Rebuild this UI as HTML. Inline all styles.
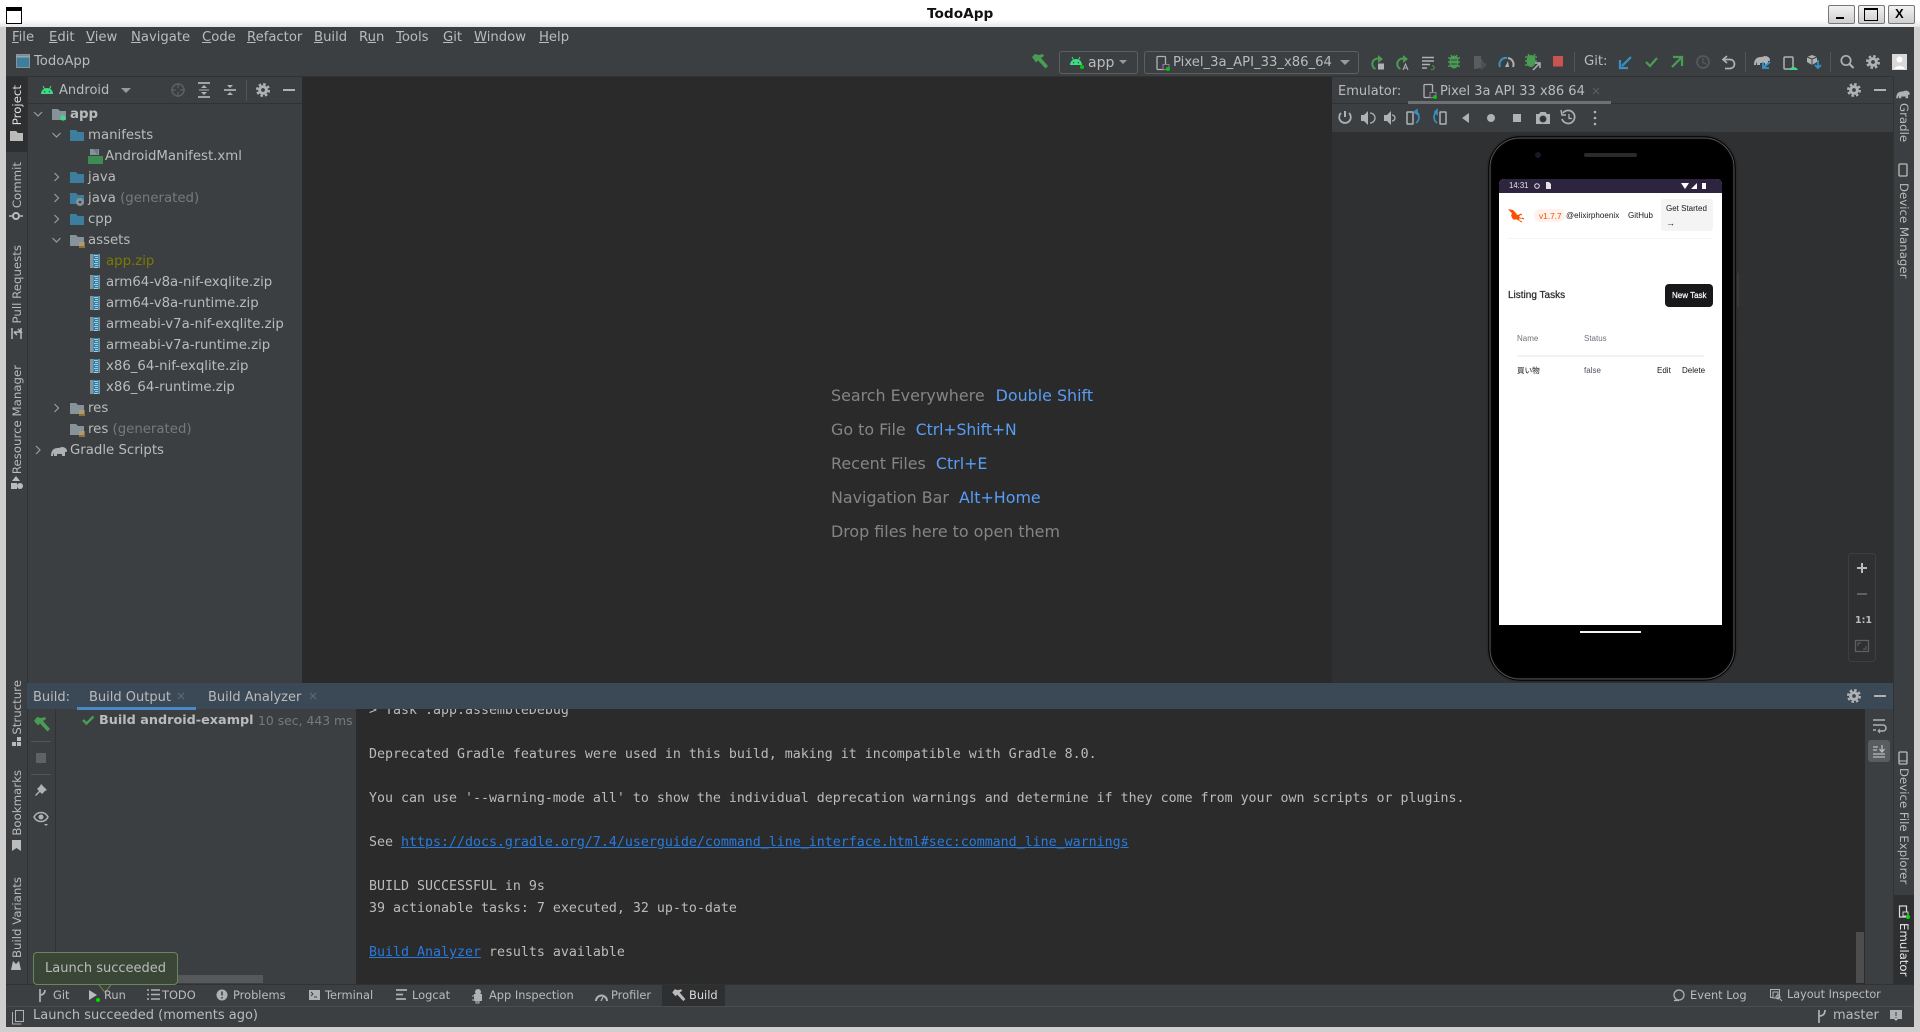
<!DOCTYPE html>
<html lang="en"><head><meta charset="utf-8"><title>TodoApp</title>
<style>
html,body{margin:0;padding:0}
body{width:1920px;height:1032px;overflow:hidden;position:relative;background:#cfcfcf;font-family:"DejaVu Sans","Liberation Sans",sans-serif;color:#bbb;font-size:13px}
.b{position:absolute}
.t{position:absolute;white-space:pre;line-height:20px;height:20px;font-size:13px;color:#bbb}
.tr{font-size:13.3px}
.m{font-size:13.2px}
.tw{font-size:11.4px}
.d{color:#787878}
.h{font-size:15.9px;line-height:24px;height:24px;color:#858585}
.h i{font-style:normal;color:#589df6;margin-left:10px}
.v{position:absolute;white-space:pre;font-size:11.75px;line-height:21px;width:21px;writing-mode:vertical-rl;color:#bbb}
.l{transform:rotate(180deg)}
.c{position:absolute;white-space:pre;font:13.29px/22px "DejaVu Sans Mono","Liberation Mono",monospace;color:#bbb;height:22px}
.c a{color:#287bde;text-decoration:underline}
.s{position:absolute;white-space:pre;font-family:"Liberation Sans","Noto Sans CJK JP",sans-serif;font-size:7.6px;line-height:10px;height:10px;color:#18181b;font-weight:500}
svg{position:absolute;left:0;top:0}
</style></head><body>
<!-- frame -->
<div class="b" style="left:0;top:0;width:1920px;height:27px;background:linear-gradient(#fff 72%,#e6e6e6)"></div>
<div class="b" style="left:6px;top:27px;width:1908px;height:1000px;background:#3c3f41"></div>
<div class="b" style="left:6px;top:76px;width:1887px;height:1px;background:#323232"></div>
<div class="b" style="left:6px;top:77px;width:21px;height:75px;background:#2d2f30"></div>
<div class="b" style="left:27px;top:77px;width:1px;height:907px;background:#323232"></div>
<div class="b" style="left:28px;top:103px;width:274px;height:1px;background:#323232"></div>
<div class="b" style="left:302px;top:77px;width:1030px;height:606px;background:#2a2a2a"></div>
<div class="b" style="left:1332px;top:103px;width:561px;height:1px;background:#323232"></div>
<div class="b" style="left:1332px;top:132px;width:561px;height:551px;background:#2f3031"></div>
<div class="b" style="left:1893px;top:895px;width:21px;height:89px;background:#2d2f30"></div>
<div class="b" style="left:1893px;top:77px;width:1px;height:907px;background:#323232"></div>
<div class="b" style="left:27px;top:683px;width:1866px;height:26px;background:#3b4856"></div>
<div class="b" style="left:77px;top:707px;width:119px;height:3px;background:#4a88c7"></div>
<div class="b" style="left:1408px;top:101px;width:203px;height:3px;background:#6e7174"></div>
<div class="b" style="left:55px;top:709px;width:1px;height:275px;background:#323232"></div>
<div class="b" style="left:356px;top:709px;width:1509px;height:275px;background:#2b2b2b;overflow:hidden"></div>
<div class="b" style="left:6px;top:984px;width:1908px;height:1px;background:#323232"></div>
<div class="b" style="left:6px;top:1006px;width:1908px;height:1px;background:#4a4d4f"></div>
<div class="b" style="left:662px;top:985px;width:63px;height:21px;background:#2d2f30"></div>
<div class="b" style="left:1868px;top:740px;width:22px;height:22px;border-radius:3px;background:#5a5d5f"></div>
<div class="b" style="left:1856px;top:932px;width:8px;height:51px;background:#4d4d4d"></div>
<div class="b" style="left:56px;top:975px;width:207px;height:8px;background:#565859"></div>
<!-- combos -->
<div class="b" style="left:1059px;top:51px;width:77px;height:21px;border:1px solid #5e6060;border-radius:3px"></div>
<div class="b" style="left:1144px;top:51px;width:213px;height:21px;border:1px solid #5e6060;border-radius:3px"></div>
<!-- window buttons -->
<div class="b" style="left:1828px;top:5px;width:25px;height:17px;background:linear-gradient(#f2f2f2,#cfcfcf);border:1px solid #777;border-radius:2px"></div>
<div class="b" style="left:1858px;top:5px;width:25px;height:17px;background:linear-gradient(#f2f2f2,#cfcfcf);border:1px solid #777;border-radius:2px"></div>
<div class="b" style="left:1888px;top:5px;width:25px;height:17px;background:linear-gradient(#f2f2f2,#cfcfcf);border:1px solid #777;border-radius:2px"></div>
<div class="b" style="left:1836px;top:17px;width:8px;height:2px;background:#000"></div>
<div class="b" style="left:1864px;top:8px;width:12px;height:10px;border:1px solid #000;border-top:2px solid #000"></div>
<div class="t" style="left:1895px;top:4px;color:#000;font:bold 13px/20px 'Liberation Sans',sans-serif">X</div>
<div class="b" style="left:6px;top:7px;width:14px;height:12px;border:1px solid #000;border-top:4px solid #000;background:#fff;box-sizing:content-box"></div>
<div class="t" style="left:927px;top:4px;color:#111;font:bold 13.7px/20px 'DejaVu Sans',sans-serif">TodoApp</div>

<svg width="1920" height="1032" viewBox="0 0 1920 1032" fill="none">
<defs>
<g id="gear"><circle r="3.4" stroke="#afb1b3" stroke-width="3"/><circle r="5.9" stroke="#afb1b3" stroke-width="2.2" stroke-dasharray="2.6 2.03"/></g>
<path id="fb" d="M0 0h6l2 2h6v9H0z" fill="#3d7d9d"/>
<path id="fg" d="M0 0h6l2 2h6v9H0z" fill="#87939a"/>
<g id="st"><path d="M0 0h6M0 2h6M0 4h6" stroke="#d9a343" stroke-width="1"/></g>
<path id="chr" d="M-2-4l4 4-4 4" stroke="#9a9c9e" stroke-width="1.2"/>
<path id="chd" d="M-4-2l4 4 4-4" stroke="#9a9c9e" stroke-width="1.2"/>
<g id="zip"><rect x="0" y="0" width="3.500" height="14" fill="#87939a"/><rect x="3.500" y="0" width="5" height="14" fill="#2f7ea8"/><path d="M4 1.500h4M5 3.500h3M4 5.500h4M5 7.500h3M4 9.500h4M5 11.500h3M4 13.500h4" stroke="#8fd4ee" stroke-width="1"/><rect x="8.500" y="0" width="1.500" height="14" fill="#87939a"/></g>
<g id="droid"><path d="M-6 4a6 6 0 0 1 12 0z" fill="#3ddc84"/><path d="M-4-4l1.6 3M4-4L2.4-1" stroke="#3ddc84"/><circle cx="-2.4" cy="1.7" r=".7" fill="#3c3f41"/><circle cx="2.4" cy="1.7" r=".7" fill="#3c3f41"/></g>
<g id="ph"><rect x="-6" y="-6.500" width="8.500" height="13" rx="1" stroke="#afb1b3" stroke-width="1.300"/><rect x="0" y="1.500" width="6" height="5" fill="#3c3f41" stroke="#9876aa"/><circle cx="5" cy="6" r="2" fill="#0c0"/></g>
<g id="ham"><path d="M-7-4l3-3 4 1 4-1 1 2-3 2 7 8-2.5 2.5-7.5-8-2 2z" fill="#499c54"/></g>
<g id="ele"><path d="M-8 5c0-6 3-8 7-8 2 0 3-1 4-1 3 0 5 2 5 4 0 1-1 1-2 1v4H3V3H-2V5H-5V2c-1 1-1 2-1 3z" fill="#afb1b3"/></g>
</defs>

<!-- toolbar project icon -->
<rect x="16.500" y="54.500" width="13" height="13" fill="#3d7d9d" stroke="#87939a"/><path d="M16 56.500h14" stroke="#9fa3a5" stroke-width="2"/>

<!-- toolbar right -->
<use href="#ham" x="1039" y="61"/>
<use href="#droid" x="1076" y="61"/><circle cx="1082" cy="67" r="2" fill="#0c0"/>
<path d="M1119 60l4 4 4-4z M1340 60l5 5 5-5z" fill="#999"/>
<use href="#ph" x="1163" y="63"/>
<!-- run -->
<path d="M1378 58.500a5.500 5.500 0 0 0-2.500 10.500" stroke="#499c54" stroke-width="2"/><path d="M1378 55l5 4-5 4z" fill="#499c54"/><rect x="1378" y="63.500" width="6" height="6" fill="#afb1b3"/>
<path d="M1403 58.500a5.500 5.500 0 0 0-2.500 10.500" stroke="#499c54" stroke-width="2"/><path d="M1403 55l5 4-5 4z" fill="#499c54"/><path d="M1403 70l2.500-6 2.500 6M1404 68h3" stroke="#afb1b3"/>
<path d="M1422 57.500h12M1422 61h12M1422 64.500h8M1422 68h5" stroke="#afb1b3" stroke-width="1.600"/><path d="M1431 69.500c3 1 5-3 1-4" stroke="#499c54"/>
<ellipse cx="1454" cy="62" rx="4.500" ry="6.500" fill="#499c54"/><path d="M1448 58h12M1448 62h12M1448 66h12M1451 55l1 2M1457 55l-1 2" stroke="#499c54" stroke-width="1.400"/><path d="M1451 60h6M1451 64h6" stroke="#3c3f41"/>
<path d="M1474 56h7v3l2 2-2 2v5l-7 1z" fill="#5a5d5f"/><path d="M1481 60l6 5-6 5z" fill="#4e5052"/>
<path d="M1500 67a6.500 6.500 0 0 1 7-9" stroke="#3592c4" stroke-width="2"/><path d="M1508 58a6.500 6.500 0 0 1 5 9" stroke="#afb1b3" stroke-width="2"/><path d="M1505 67l3-6 1 6z" fill="#afb1b3"/>
<ellipse cx="1531" cy="61" rx="4.500" ry="6" fill="#499c54"/><path d="M1525 57h12M1525 61h12M1525 65h8M1528 54l1 2M1535 54l-1 2" stroke="#499c54" stroke-width="1.500"/><path d="M1533 70l6-6M1535 63h5v5" stroke="#afb1b3" stroke-width="1.500"/>
<rect x="1553" y="56" width="10" height="10.500" fill="#c75450"/>
<path d="M1574.500 52v20M1745.500 52v20M1830.500 52v20" stroke="#515658"/>
<path d="M1631 57l-9 9M1620 60v8h8" stroke="#3592c4" stroke-width="2.200"/>
<path d="M1646 62l4 4 7-8" stroke="#499c54" stroke-width="2.200"/>
<path d="M1672 67l9-9M1673 57h9v9" stroke="#499c54" stroke-width="2.200"/>
<circle cx="1703" cy="62" r="6" stroke="#55585a" stroke-width="1.800"/><path d="M1703 58v4.500l3 1.500" stroke="#55585a" stroke-width="1.300"/>
<path d="M1727 56l-4 3.500 4 3.500" stroke="#afb1b3" stroke-width="1.700"/><path d="M1724 59.500h6a4 4 0 0 1 0 9h-5" stroke="#afb1b3" stroke-width="1.700"/>
<g transform="translate(1762 60)"><use href="#ele"/><path d="M8 2l-6 5M1 2v6h6" stroke="#3592c4" stroke-width="1.800"/></g>
<rect x="1784" y="57" width="9" height="12" rx="1" stroke="#afb1b3" stroke-width="1.500"/><path d="M1789 70a5 5 0 0 1 9 0z" fill="#3ddc84"/>
<path d="M1807 57l5-2 5 2v5l-5 3-5-3z" fill="#afb1b3"/><path d="M1807 57l5 2 5-2M1812 59v6" stroke="#3c3f41"/><path d="M1818 60v8M1815 65l3 3 3-3" stroke="#3592c4" stroke-width="1.800"/>
<circle cx="1846" cy="60.500" r="4.700" stroke="#afb1b3" stroke-width="1.700"/><path d="M1849.500 64l4 4" stroke="#afb1b3" stroke-width="2"/>
<use href="#gear" x="1873" y="62"/>
<rect x="1892" y="54" width="15" height="16" fill="#d8d8d8"/><circle cx="1899.500" cy="59.500" r="3" fill="#fff"/><path d="M1894 69a6 5 0 0 1 11 0z" fill="#fff"/>

<!-- project header -->
<use href="#droid" x="47" y="90"/>
<path d="M121 88l5 5 5-5z" fill="#999"/>
<circle cx="178" cy="90" r="6" stroke="#5e6060" stroke-width="1.500"/><path d="M178 83v5M178 92v5M171 90h5M180 90h5" stroke="#5e6060" stroke-width="1.200"/>
<path d="M198 83h12M198 97h12" stroke="#afb1b3" stroke-width="1.700"/><path d="M204 85l-3 3h6zM204 95l-3-3h6z" fill="#afb1b3"/><path d="M199 90h10" stroke="#afb1b3"/>
<path d="M224 90h12" stroke="#afb1b3" stroke-width="1.700"/><path d="M230 88l-3-3h6zM230 92l-3 3h6z" fill="#afb1b3"/>
<path d="M246.500 80v21" stroke="#515658"/>
<use href="#gear" x="263" y="90"/>
<path d="M283 90h12" stroke="#afb1b3" stroke-width="2"/>

<!-- tree icons -->
<use href="#chd" x="38" y="114"/><use href="#fg" x="52" y="109"/><circle cx="63" cy="118" r="2.600" fill="#3ddc84"/>
<use href="#chd" x="56.500" y="135"/><use href="#fb" x="70" y="130"/>
<rect x="90" y="149" width="9" height="6" fill="#87939a"/><rect x="88" y="156" width="15" height="8" fill="#3d8c52"/><path d="M93 149h5v7" fill="#6d7a82"/>
<use href="#chr" x="56.500" y="177"/><use href="#fb" x="70" y="172"/>
<use href="#chr" x="56.500" y="198"/><use href="#fb" x="70" y="193"/><circle cx="80" cy="202" r="4" fill="#87939a"/><circle cx="80" cy="202" r="1.300" fill="#3c3f41"/>
<use href="#chr" x="56.500" y="219"/><use href="#fb" x="70" y="214"/>
<use href="#chd" x="56.500" y="240"/><use href="#fg" x="70" y="235"/><use href="#st" x="79" y="243"/>
<use href="#zip" x="90" y="254"/><use href="#zip" x="90" y="275"/><use href="#zip" x="90" y="296"/><use href="#zip" x="90" y="317"/><use href="#zip" x="90" y="338"/><use href="#zip" x="90" y="359"/><use href="#zip" x="90" y="380"/>
<use href="#chr" x="56.500" y="408"/><use href="#fg" x="70" y="403"/><use href="#st" x="79" y="411"/>
<use href="#fg" x="70" y="424"/><use href="#st" x="79" y="432"/>
<use href="#chr" x="38" y="450"/>
<g transform="translate(59 451)"><use href="#ele"/></g>

<!-- left strip icons -->
<path d="M10 131h6l2 2h5v8H10z" fill="#bbb"/>
<circle cx="16" cy="216" r="3" stroke="#bbb" stroke-width="2"/><path d="M9 216h3M20 216h3" stroke="#bbb" stroke-width="1.500"/>
<path d="M12 328v11M21 328v11M14 332h7l-3-3M14 332l3 3" stroke="#bbb" stroke-width="1.500"/>
<path d="M16 476l4 5h-8z" fill="#bbb"/><rect x="11" y="483" width="6" height="6" fill="#bbb"/><circle cx="20" cy="486" r="3" fill="#bbb"/>
<rect x="12" y="742" width="4" height="4" fill="#bbb"/><rect x="17" y="737" width="4" height="4" fill="#bbb"/><rect x="17" y="742" width="4" height="4" fill="#bbb"/>
<path d="M12 840h9v11l-4.500-3-4.500 3z" fill="#bbb"/>
<path d="M11 970l2-9 3 3 3-3 2 9z" fill="#bbb"/>

<!-- right strip icons -->
<g transform="translate(1903 94) scale(.85)"><use href="#ele"/></g>
<rect x="1899" y="164" width="8" height="12" rx="1" stroke="#bbb" stroke-width="1.300"/>
<rect x="1899" y="752" width="8" height="12" rx="1" stroke="#bbb" stroke-width="1.300"/><path d="M1899 761h8" stroke="#bbb"/>
<rect x="1899.500" y="906" width="7" height="11" stroke="#ddd" stroke-width="1.200"/><rect x="1903" y="912" width="5" height="4" fill="#2d2f30" stroke="#ccc"/><circle cx="1908" cy="917" r="2" fill="#0d0"/>

<!-- emulator header -->
<use href="#ph" x="1430" y="91"/>
<path d="M1593 88l6 6M1599 88l-6 6" stroke="#5e6060" stroke-width="1.100"/>
<use href="#gear" x="1854" y="90"/>
<path d="M1874 90h12" stroke="#afb1b3" stroke-width="2"/>

<!-- emulator toolbar -->
<path d="M1345 111v6" stroke="#afb1b3" stroke-width="2"/><path d="M1341 113a5.800 5.800 0 1 0 8 0" stroke="#afb1b3" stroke-width="1.700"/>
<path d="M1361 115h3l4-4v14l-4-4h-3z" fill="#afb1b3"/><path d="M1370 113a5 5 0 0 1 0 10" stroke="#afb1b3" stroke-width="1.300"/>
<path d="M1384 115h3l4-4v14l-4-4h-3z" fill="#afb1b3"/><path d="M1392 115a3 3 0 0 1 0 6" stroke="#afb1b3" stroke-width="1.300"/>
<rect x="1407" y="112" width="6" height="12" rx=".5" stroke="#afb1b3" stroke-width="1.500"/><path d="M1416 112c4 2 4 8 0 11M1414 112l3-2v4z" stroke="#3592c4" stroke-width="1.600"/>
<rect x="1440" y="112" width="6" height="12" rx=".5" stroke="#afb1b3" stroke-width="1.500"/><path d="M1437 112c-4 2-4 8 0 11M1435 112l2-2v4z" stroke="#3592c4" stroke-width="1.600"/>
<path d="M1469 113l-7 5 7 5z" fill="#afb1b3"/>
<circle cx="1491" cy="118" r="4" fill="#afb1b3"/>
<rect x="1513" y="114" width="8" height="8" fill="#afb1b3"/>
<path d="M1536 114h3l1.500-2h5l1.500 2h3v10h-14z" fill="#afb1b3"/><circle cx="1543" cy="119" r="3" fill="#2f3133" stroke="#3c3f41"/>
<path d="M1563 113a6.500 6.500 0 1 1-1 6" stroke="#afb1b3" stroke-width="1.700"/><path d="M1561 110l1 5h4" stroke="#afb1b3" stroke-width="1.500"/><path d="M1569 114v4.500h3" stroke="#afb1b3" stroke-width="1.300"/>
<circle cx="1595" cy="112" r="1.300" fill="#afb1b3"/><circle cx="1595" cy="118" r="1.300" fill="#afb1b3"/><circle cx="1595" cy="124" r="1.300" fill="#afb1b3"/>

<!-- phone -->
<rect x="1737" y="273" width="2" height="34" fill="#3a3a3a"/><rect x="1737" y="343" width="1" height="2" fill="#3a3a3a"/>
<rect x="1487.500" y="135.500" width="249" height="546" rx="33" fill="#000" stroke="#2a2a2a" stroke-width="1.500"/>
<rect x="1490" y="138" width="244" height="541" rx="30" stroke="#5a5a5a" stroke-width="1"/>
<rect x="1491" y="139" width="242" height="539" rx="29" stroke="#0a0a0a" stroke-width="1"/>
<circle cx="1538" cy="155" r="3" fill="#151a28"/>
<rect x="1584" y="153" width="53" height="4" rx="2" fill="#2a2a2a"/>

<!-- zoom controls -->
<rect x="1848.500" y="553.500" width="27" height="108" rx="3" stroke="#3c3f41"/>
<path d="M1857 568h10M1862 563v10" stroke="#bbb" stroke-width="2"/>
<path d="M1857 594h10" stroke="#5f6062" stroke-width="2"/>
<rect x="1855.500" y="640.500" width="13" height="11" stroke="#5f6062" stroke-width="1.300"/><path d="M1858 646v-3h3M1866 646v3h-3" stroke="#5f6062"/>

<!-- bottom header icons -->
<path d="M178 693l6 6M184 693l-6 6M310 693l6 6M316 693l-6 6" stroke="#5e6a76" stroke-width="1.100"/>
<use href="#gear" x="1854" y="696"/>
<path d="M1874 696h12" stroke="#afb1b3" stroke-width="2"/>

<!-- build left toolbar -->
<g transform="translate(41 724)"><path d="M-7-3l3-4 4 1 4-1 1 2-3 2 7 8-2.500 2.500-7.500-8-2 2z" fill="#499c54"/></g>
<path d="M31 741.500h20M31 774.500h20" stroke="#515658"/>
<rect x="36" y="753" width="10" height="10" fill="#5f6163"/>
<path d="M41 788l5 5-2 1-3 3-2-2-4 4-1-1 4-4-2-2 3-3 1-2z" fill="#afb1b3" transform="translate(1 -3)"/>
<path d="M34 817c3-6 11-6 14 0-3 6-11 6-14 0z" stroke="#afb1b3" stroke-width="1.500"/><circle cx="41" cy="817" r="2.500" fill="#afb1b3"/><path d="M44 824l4 0-2 2z" fill="#afb1b3"/>
<path d="M83 720l3.500 3.500 7-7" stroke="#499c54" stroke-width="2.500"/>

<!-- right mini toolbar -->
<path d="M1873 720h12M1873 725h10a3 3 0 0 1 0 6h-4M1873 730h3" stroke="#afb1b3" stroke-width="1.500"/><path d="M1880 729l-2 2 2 2" stroke="#afb1b3"/>
<path d="M1873 747h5M1873 750h4M1873 754h12M1873 757h12" stroke="#bbb" stroke-width="1.300"/><path d="M1882 745v6M1879.500 749l2.500 3 2.500-3" stroke="#bbb" stroke-width="1.300"/>

<!-- bottom tool bar icons -->
<path d="M40 989v13M40 995c3 0 5-2 5-5" stroke="#afb1b3" stroke-width="1.700"/>
<path d="M89 990l8 5-8 5z" fill="#bbb"/><circle cx="98" cy="1000" r="2" fill="#0d0"/>
<path d="M147 990h2M147 994.500h2M147 999h2M151 990h9M151 994.500h9M151 999h9" stroke="#afb1b3" stroke-width="1.500"/>
<circle cx="222" cy="995" r="5.500" fill="#afb1b3"/><path d="M222 991.500v4M222 997v1.500" stroke="#3c3f41" stroke-width="1.500"/>
<rect x="309" y="990" width="11" height="10" fill="#afb1b3"/><path d="M311 992l2 2-2 2M314 997h3" stroke="#3c3f41"/>
<path d="M396 990h11M396 994.500h7M396 999h10" stroke="#afb1b3" stroke-width="1.800"/>
<circle cx="478" cy="992" r="3" fill="#afb1b3"/><rect x="474" y="994" width="8" height="7" fill="#afb1b3"/><path d="M472 996h10M472 1000h10M476 1001h3v2h-3z" stroke="#afb1b3"/>
<path d="M596 1001a5.500 5.500 0 0 1 11 0" stroke="#afb1b3" stroke-width="2"/><path d="M601 1001l2-4" stroke="#afb1b3" stroke-width="1.300"/>
<g transform="translate(678 995) scale(.82)"><path d="M-7-3l3-4 4 1 4-1 1 2-3 2 7 8-2.500 2.500-7.500-8-2 2z" fill="#bbb"/></g>
<circle cx="1679" cy="995" r="5" stroke="#afb1b3" stroke-width="1.300"/><path d="M1674 1000.500h5" stroke="#afb1b3" stroke-width="1.300"/>
<rect x="1770.500" y="989.500" width="9" height="8" stroke="#afb1b3"/><rect x="1773" y="992" width="5" height="6" fill="#3c3f41" stroke="#afb1b3"/><circle cx="1778" cy="997" r="2" stroke="#afb1b3"/><path d="M1780 999l2 2" stroke="#afb1b3"/>
<!-- status bar -->
<rect x="15.500" y="1010.500" width="8" height="11" stroke="#afb1b3"/><path d="M12.500 1012v12h9" stroke="#afb1b3"/>
<path d="M1819 1010v13M1819 1016c3 0 6-1 6-6" stroke="#afb1b3" stroke-width="1.700"/>
<path d="M1890 1010h12v9h-4l-2 2-2-2h-4z" fill="#afb1b3"/><path d="M1896 1012v4M1896 1017v1" stroke="#3c3f41"/>

<!-- tooltip -->
<path d="M98 983.500l7 9 7-9" fill="#3a4736" stroke="#6c8560"/>
</svg>
<div class="b" style="left:33px;top:952px;width:143px;height:31px;background:#3a4736;border:1px solid #6c8560;border-radius:4px"></div>
<div class="b" style="left:99px;top:982px;width:12px;height:2px;background:#3a4736"></div>
<div class="t" style="left:45px;top:959px">Launch succeeded</div>

<!-- Android screen -->
<div class="b" style="left:1499px;top:179px;width:223px;height:446px;background:#fff;border-radius:5px 5px 0 0;overflow:hidden">
 <div class="b" style="left:0;top:0;width:223px;height:14px;background:#2d2440"></div>
</div>
<svg width="1920" height="1032" viewBox="0 0 1920 1032" fill="none">
<circle cx="1537" cy="186" r="2.300" stroke="#e6e1e5"/><path d="M1546 182h3l2 2v5h-5z" fill="#e6e1e5"/>
<path d="M1681 183h8l-4 6z" fill="#fff"/><path d="M1691 189l6-6v6z" fill="#fff"/><rect x="1702" y="183" width="4" height="6" fill="#fff"/>
<path d="M1508 209l5 1 3 3 1 2 4-1-2 3 4 2-4-.5 1 3-3-2-4 0-2-4 1-2z" fill="#fd4f00"/><path d="M1520 214l2 1M1522 218l2 1M1520 221l2 1" stroke="#fd4f00"/>
<rect x="1534" y="209" width="31" height="13" rx="6.500" fill="#fff1ec"/>
<rect x="1661" y="199" width="52" height="32" rx="3" fill="#f4f4f5"/>
<path d="M1508 238.500h205" stroke="#f4f4f5"/>
<rect x="1665" y="284" width="48" height="23" rx="4" fill="#18181b"/>
<path d="M1517 356h187" stroke="#e4e4e7"/>
<rect x="1580" y="631" width="61" height="2" fill="#f4f4f4"/>
</svg>
<div class="s" style="left:1509px;top:181px;color:#e6e1e5;font-size:7.800px">14:31</div>
<div class="s" style="left:1539px;top:211px;color:#fd4f00;font-weight:400;font-size:8.300px">v1.7.7</div>
<div class="s" style="left:1566px;top:211px;font-size:8px;letter-spacing:.05px">@elixirphoenix</div>
<div class="s" style="left:1628px;top:211px;font-size:8px">GitHub</div>
<div class="s" style="left:1666px;top:204px;font-size:8px">Get Started</div>
<div class="s" style="left:1666px;top:218px;font-size:9px">→</div>
<div class="s" style="left:1508px;top:291px;font-size:10px;color:#2a2a2e;-webkit-text-stroke:.25px #2a2a2e">Listing Tasks</div>
<div class="s" style="left:1672px;top:291px;color:#fff;font-weight:400;font-size:8px;-webkit-text-stroke:.2px #fff">New Task</div>
<div class="s" style="left:1517px;top:334px;color:#71717a;font-size:8px">Name</div>
<div class="s" style="left:1584px;top:334px;color:#71717a;font-size:8px">Status</div>
<div class="s" style="left:1517px;top:366px;color:#3f3f46">買い物</div>
<div class="s" style="left:1584px;top:366px;color:#52525b;font-size:8px">false</div>
<div class="s" style="left:1657px;top:366px;font-size:8px">Edit</div>
<div class="s" style="left:1682px;top:366px;font-size:8px">Delete</div>
<div class="t" style="left:1855px;top:610px;font-size:9.500px;font-weight:700;top:611px">1:1</div>

<!-- menu -->
<div class="t m" style="left:12px;top:28px"><u>F</u>ile</div>
<div class="t m" style="left:49px;top:28px"><u>E</u>dit</div>
<div class="t m" style="left:86px;top:28px"><u>V</u>iew</div>
<div class="t m" style="left:131px;top:28px"><u>N</u>avigate</div>
<div class="t m" style="left:202px;top:28px"><u>C</u>ode</div>
<div class="t m" style="left:247px;top:28px"><u>R</u>efactor</div>
<div class="t m" style="left:314px;top:28px"><u>B</u>uild</div>
<div class="t m" style="left:359px;top:28px">R<u>u</u>n</div>
<div class="t m" style="left:396px;top:28px"><u>T</u>ools</div>
<div class="t m" style="left:443px;top:28px"><u>G</u>it</div>
<div class="t m" style="left:474px;top:28px"><u>W</u>indow</div>
<div class="t m" style="left:539px;top:28px"><u>H</u>elp</div>
<div class="t m" style="left:34px;top:52px">TodoApp</div>
<div class="t m" style="left:1088px;top:53px;font-size:14px">app</div>
<div class="t m" style="left:1173px;top:53px">Pixel_3a_API_33_x86_64</div>
<div class="t m" style="left:1584px;top:52px">Git:</div>
<div class="t" style="left:1338px;top:82px">Emulator:</div>
<div class="t" style="left:1440px;top:82px">Pixel 3a API 33 x86 64</div>

<!-- project panel -->
<div class="t" style="left:59px;top:81px">Android</div>
<div class="t tr" style="left:70px;top:105px;font-weight:700">app</div>
<div class="t tr" style="left:88px;top:126px">manifests</div>
<div class="t tr" style="left:105px;top:147px">AndroidManifest.xml</div>
<div class="t tr" style="left:88px;top:168px">java</div>
<div class="t tr" style="left:88px;top:189px">java <span class="d">(generated)</span></div>
<div class="t tr" style="left:88px;top:210px">cpp</div>
<div class="t tr" style="left:88px;top:231px">assets</div>
<div class="t tr" style="left:106px;top:252px;color:#7a7a00">app.zip</div>
<div class="t tr" style="left:106px;top:273px">arm64-v8a-nif-exqlite.zip</div>
<div class="t tr" style="left:106px;top:294px">arm64-v8a-runtime.zip</div>
<div class="t tr" style="left:106px;top:315px">armeabi-v7a-nif-exqlite.zip</div>
<div class="t tr" style="left:106px;top:336px">armeabi-v7a-runtime.zip</div>
<div class="t tr" style="left:106px;top:357px">x86_64-nif-exqlite.zip</div>
<div class="t tr" style="left:106px;top:378px">x86_64-runtime.zip</div>
<div class="t tr" style="left:88px;top:399px">res</div>
<div class="t tr" style="left:88px;top:420px">res <span class="d">(generated)</span></div>
<div class="t tr" style="left:70px;top:441px">Gradle Scripts</div>

<!-- hints -->
<div class="t h" style="left:831px;top:384px">Search Everywhere<i style="margin-left:11px">Double Shift</i></div>
<div class="t h" style="left:831px;top:418px">Go to File<i style="font-size:15.6px">Ctrl+Shift+N</i></div>
<div class="t h" style="left:831px;top:452px">Recent Files<i>Ctrl+E</i></div>
<div class="t h" style="left:831px;top:486px">Navigation Bar<i>Alt+Home</i></div>
<div class="t h" style="left:831px;top:520px">Drop files here to open them</div>

<!-- left strip labels -->
<div class="v l" style="left:7px;top:85px;color:#e0e0e0">Project</div>
<div class="v l" style="left:7px;top:162px">Commit</div>
<div class="v l" style="left:7px;top:245px">Pull Requests</div>
<div class="v l" style="left:7px;top:365px">Resource Manager</div>
<div class="v l" style="left:7px;top:680px">Structure</div>
<div class="v l" style="left:7px;top:770px">Bookmarks</div>
<div class="v l" style="left:7px;top:877px">Build Variants</div>
<!-- right strip labels -->
<div class="v" style="left:1893px;top:103px">Gradle</div>
<div class="v" style="left:1893px;top:183px">Device Manager</div>
<div class="v" style="left:1893px;top:768px">Device File Explorer</div>
<div class="v" style="left:1893px;top:923px;color:#e8e8e8">Emulator</div>

<!-- build panel -->
<div class="t" style="left:33px;top:688px">Build:</div>
<div class="t" style="left:89px;top:688px">Build Output</div>
<div class="t" style="left:208px;top:688px">Build Analyzer</div>
<div class="t" style="left:99px;top:711px;width:154px;overflow:hidden;font-weight:700;font-size:12.800px">Build android-example</div>
<div class="t" style="left:258px;top:711px;color:#787878;font-size:12.400px">10 sec, 443 ms</div>
<div class="b" style="left:356px;top:709px;width:1500px;height:274px;overflow:hidden">
 <div class="c" style="left:13px;top:-9px">&gt; Task :app:assembleDebug</div>
 <div class="c" style="left:13px;top:35px">Deprecated Gradle features were used in this build, making it incompatible with Gradle 8.0.</div>
 <div class="c" style="left:13px;top:79px">You can use '--warning-mode all' to show the individual deprecation warnings and determine if they come from your own scripts or plugins.</div>
 <div class="c" style="left:13px;top:123px">See <a>https://docs.gradle.org/7.4/userguide/command_line_interface.html#sec:command_line_warnings</a></div>
 <div class="c" style="left:13px;top:167px">BUILD SUCCESSFUL in 9s</div>
 <div class="c" style="left:13px;top:189px">39 actionable tasks: 7 executed, 32 up-to-date</div>
 <div class="c" style="left:13px;top:233px"><a>Build Analyzer</a> results available</div>
</div>

<!-- bottom tools -->
<div class="t tw" style="left:53px;top:985px">Git</div>
<div class="t tw" style="left:104px;top:985px">Run</div>
<div class="t tw" style="left:162px;top:985px">TODO</div>
<div class="t tw" style="left:233px;top:985px">Problems</div>
<div class="t tw" style="left:325px;top:985px">Terminal</div>
<div class="t tw" style="left:412px;top:985px">Logcat</div>
<div class="t tw" style="left:489px;top:985px">App Inspection</div>
<div class="t tw" style="left:611px;top:985px">Profiler</div>
<div class="t tw" style="left:689px;top:985px;color:#ddd">Build</div>
<div class="t tw" style="left:1690px;top:985px">Event Log</div>
<div class="t tw" style="left:1787px;top:985px;font-size:11.2px">Layout Inspector</div>
<div class="t" style="left:33px;top:1006px">Launch succeeded (moments ago)</div>
<div class="t" style="left:1833px;top:1006px">master</div>
</body></html>
